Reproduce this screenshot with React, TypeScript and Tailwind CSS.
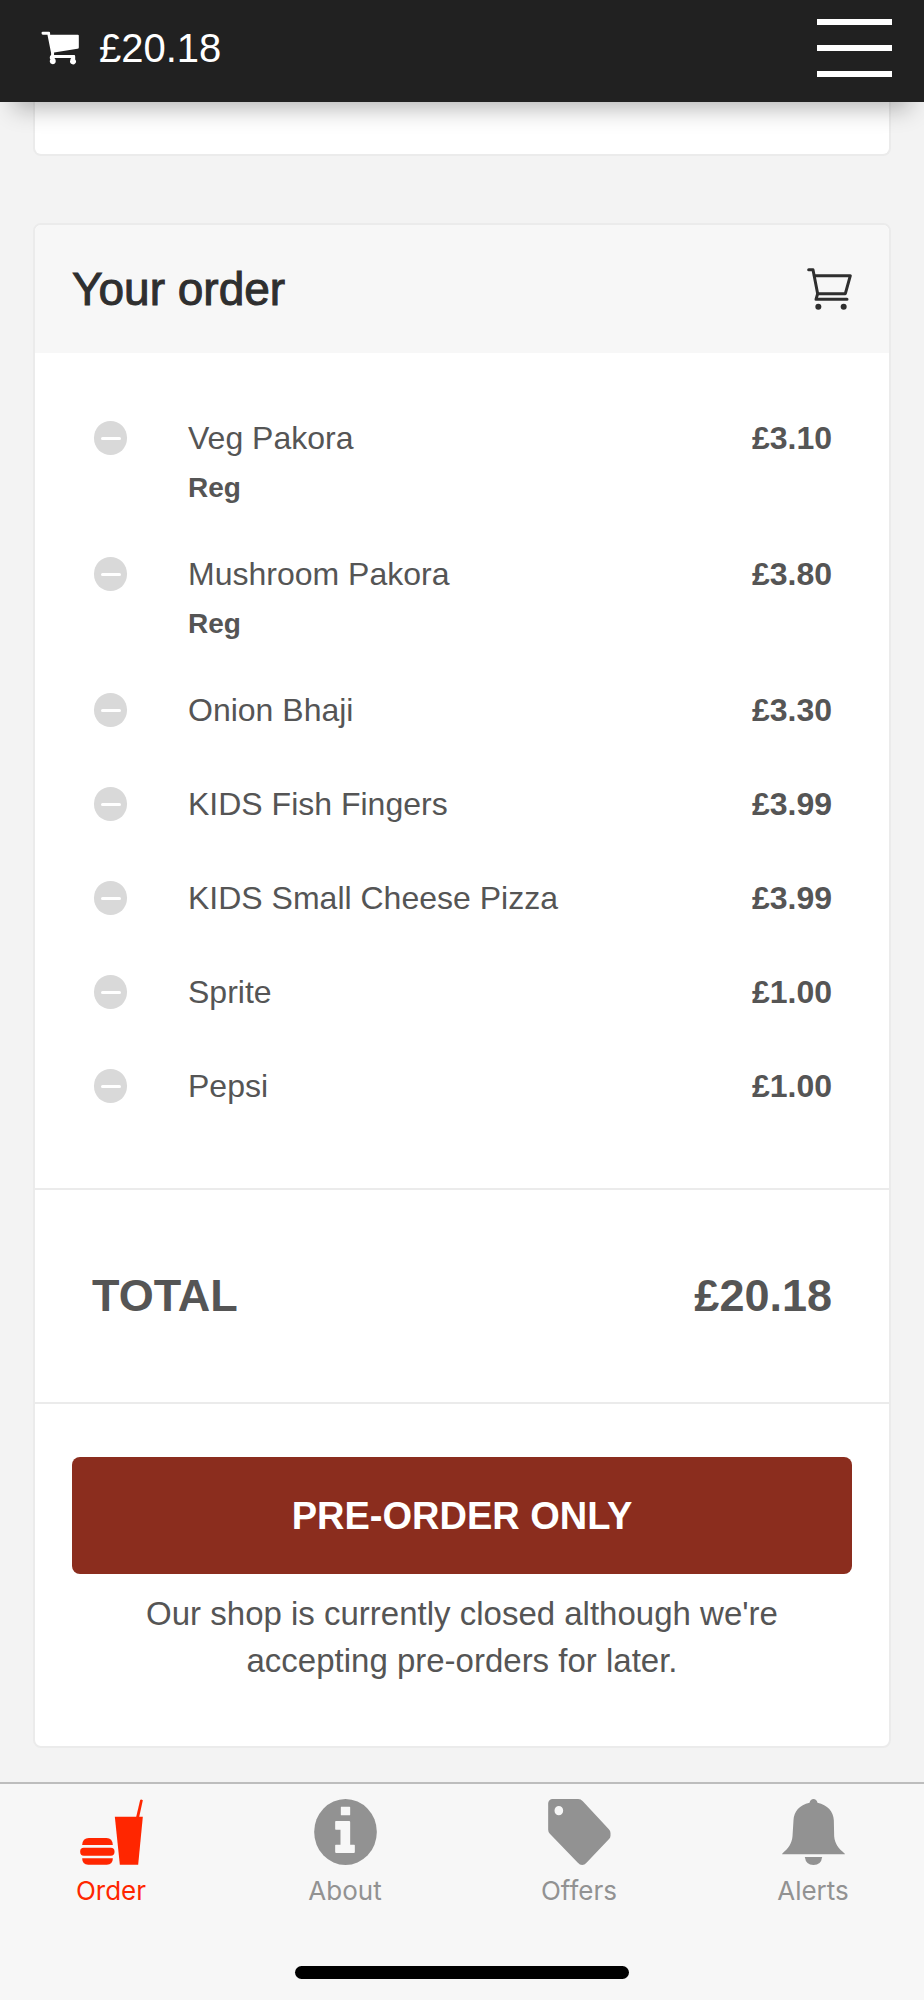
import React, { useState } from "react";

interface OrderItem {
    name: string;
    option?: string;
    price: string;
}

interface Tab {
    label: string;
    icon: React.ReactNode;
}

const items: OrderItem[] = [
    { name: "Veg Pakora", option: "Reg", price: "£3.10" },
    { name: "Mushroom Pakora", option: "Reg", price: "£3.80" },
    { name: "Onion Bhaji", price: "£3.30" },
    { name: "KIDS Fish Fingers", price: "£3.99" },
    { name: "KIDS Small Cheese Pizza", price: "£3.99" },
    { name: "Sprite", price: "£1.00" },
    { name: "Pepsi", price: "£1.00" },
];

const SolidCart = () => (
    <svg viewBox="0 0 114 103" className="h-[34px] w-[38px]" fill="currentColor" aria-hidden="true">
        <path d="M5 2H23Q27 2 27 6V11H111Q114 11 114 14V50Q114 54 110 54L39 65V73H100Q103 73 103 77V86A9 9 0 1 1 88 89Q88 85 91 82H40Q44 85 44 90A9 9 0 1 1 28 86Q26 84 26 80Q26 76 30 73V67L19 11H5Q1 11 1 6Q1 2 5 2Z" />
    </svg>
);

const OutlineCart = () => (
    <svg viewBox="0 0 135 126" className="h-[42px] w-[45px]" fill="none" stroke="currentColor" strokeWidth="9" strokeLinecap="round" strokeLinejoin="round" aria-hidden="true">
        <path d="M5 5H18L32 77L27 94H120" />
        <path d="M22 23H130L115 77H32" />
        <circle cx="34" cy="116" r="9" fill="currentColor" stroke="none" />
        <circle cx="110" cy="116" r="9" fill="currentColor" stroke="none" />
    </svg>
);

const FoodIcon = () => (
    <svg viewBox="0 0 188 198" className="h-[66px] w-[63px]" fill="currentColor" aria-hidden="true">
        <path d="M6 138Q7 117 26 117H79Q97 117 98 138Z" />
        <rect x="0" y="146" width="103" height="24" rx="11" />
        <path d="M6 178H98Q98 197 80 197H24Q6 197 6 178Z" />
        <path d="M104 53H188L174 197H119Z" />
        <path d="M168 54L180 3Q183 0 188 4L177 54Z" />
    </svg>
);

const InfoIcon = () => (
    <svg viewBox="0 0 188 198" className="h-[66px] w-[63px]" fill="currentColor" aria-hidden="true">
        <ellipse cx="94" cy="99" rx="94" ry="99" />
        <path fill="#f7f7f7" d="M81 23H106Q108 23 108 25V47Q108 49 106 49H82Q80 49 80 47V25Q80 23 81 23ZM65 66H105Q108 66 108 69V137H120Q122 137 122 139V159Q122 162 119 162H66Q63 162 63 159V139Q63 137 65 137H79V92H65Q63 92 63 90V69Q63 66 65 66Z" />
    </svg>
);

const TagIcon = () => (
    <svg viewBox="0 0 188 198" className="h-[66px] w-[63px]" fill="currentColor" aria-hidden="true">
        <path fillRule="evenodd" d="M13 0H90Q98 0 104 7L182 91Q187 96 187 102V110Q187 116 182 121L115 191Q109 198 102 198Q95 198 89 191L5 104Q0 99 0 92V13Q0 8 4 4Q8 0 13 0ZM32 21A13 14 0 1 0 32 49A13 14 0 1 0 32 21Z" />
    </svg>
);

const BellIcon = () => (
    <svg viewBox="0 0 188 198" className="h-[66px] w-[63px]" fill="currentColor" aria-hidden="true">
        <path d="M94 0Q103 0 106 11C136 18 154 37 155 64L156 112C158 134 168 148 188 164V166H0V164C19 148 29 134 31 112L34 64C35 37 52 18 82 11Q85 0 94 0Z" />
        <path d="M68 174H120Q117 198 94 198Q71 198 68 174Z" />
    </svg>
);

const tabs: Tab[] = [
    { label: "Order", icon: <FoodIcon /> },
    { label: "About", icon: <InfoIcon /> },
    { label: "Offers", icon: <TagIcon /> },
    { label: "Alerts", icon: <BellIcon /> },
];

const App: React.FC = () => {
    const [activeTab, setActiveTab] = useState("Order");

    return (
        <div className="flex min-h-screen flex-col bg-[#f3f3f3] font-['Liberation_Sans',Arial,sans-serif] text-[#555]">
            <header className="relative z-10 flex h-[102px] items-center justify-between bg-[#212121] pr-8 pb-[6px] pl-[41px] text-white shadow-[0_20px_24px_-14px_rgba(0,0,0,0.3)]">
                <a href="#order" className="flex items-center gap-5 text-[40px] leading-[48px]">
                    <SolidCart />
                    £20.18
                </a>
                <button aria-label="Menu" className="flex w-[75px] flex-col gap-5">
                    <span className="h-[6px] bg-white" />
                    <span className="h-[6px] bg-white" />
                    <span className="h-[6px] bg-white" />
                </button>
            </header>

            <main className="flex-1 px-[33px] pb-[34px]">
                {/* bottom edge of the card scrolled under the header */}
                <div className="h-[54px] rounded-b-lg border-2 border-t-0 border-[#ebebeb] bg-white" />

                <section id="order" className="mt-[67px] overflow-hidden rounded-lg border-2 border-[#ebebeb] bg-white">
                    <div className="flex h-32 items-center justify-between bg-[#f7f7f7] px-[37px] text-[#2f2f2f]">
                        <h2 className="text-[46px] leading-[56px] [-webkit-text-stroke:1px_currentColor]">Your order</h2>
                        <OutlineCart />
                    </div>

                    <ul className="pt-[62px] pr-[57px] pb-[31px] pl-[59px] text-[32px] leading-[47px]">
                        {items.map((item) => (
                            <li key={item.name} className="flex min-h-[94px] items-start pb-[37px]">
                                <button aria-label={`Remove ${item.name}`} className="flex h-[46px] w-[94px] items-center">
                                    <span className="flex h-[34px] w-[33px] items-center justify-center rounded-full bg-[#d9d9d9]">
                                        <span className="h-[3px] w-5 rounded-full bg-white" />
                                    </span>
                                </button>
                                <div className="flex-1">
                                    <p>{item.name}</p>
                                    {item.option && <p className="text-[28px] leading-[52px] font-bold">{item.option}</p>}
                                </div>
                                <span className="font-bold">{item.price}</span>
                            </li>
                        ))}
                    </ul>

                    <div className="flex h-[216px] items-center justify-between border-y-2 border-[#ebebeb] px-[57px] text-[45px] leading-[56px] font-bold">
                        <span>TOTAL</span>
                        <span>£20.18</span>
                    </div>

                    <div className="px-[37px] pt-[53px] pb-[62px] text-center">
                        <button className="h-[117px] w-full rounded-lg bg-[#8b2d1e] text-[38px] leading-[48px] font-bold text-white">
                            PRE-ORDER ONLY
                        </button>
                        <p className="mx-auto mt-4 max-w-[680px] text-[33px] leading-[47px]">
                            Our shop is currently closed although we're accepting pre-orders for later.
                        </p>
                    </div>
                </section>
            </main>

            <footer className="border-t-2 border-[#bdbdbd] bg-[#f7f7f7] pb-[21px]">
                <nav className="flex justify-between px-[66px] pt-[15px]">
                    {tabs.map((tab) => (
                        <button
                            key={tab.label}
                            onClick={() => setActiveTab(tab.label)}
                            className={`flex w-[90px] flex-col items-center gap-[10px] font-[Inter,sans-serif] text-[26px] leading-8 ${activeTab === tab.label ? "text-[#ff2600]" : "text-[#929292]"}`}
                        >
                            {tab.icon}
                            {tab.label}
                        </button>
                    ))}
                </nav>
                <div className="mx-auto mt-[59px] h-[13px] w-[334px] rounded-full bg-black" />
            </footer>
        </div>
    );
};

export default App;
